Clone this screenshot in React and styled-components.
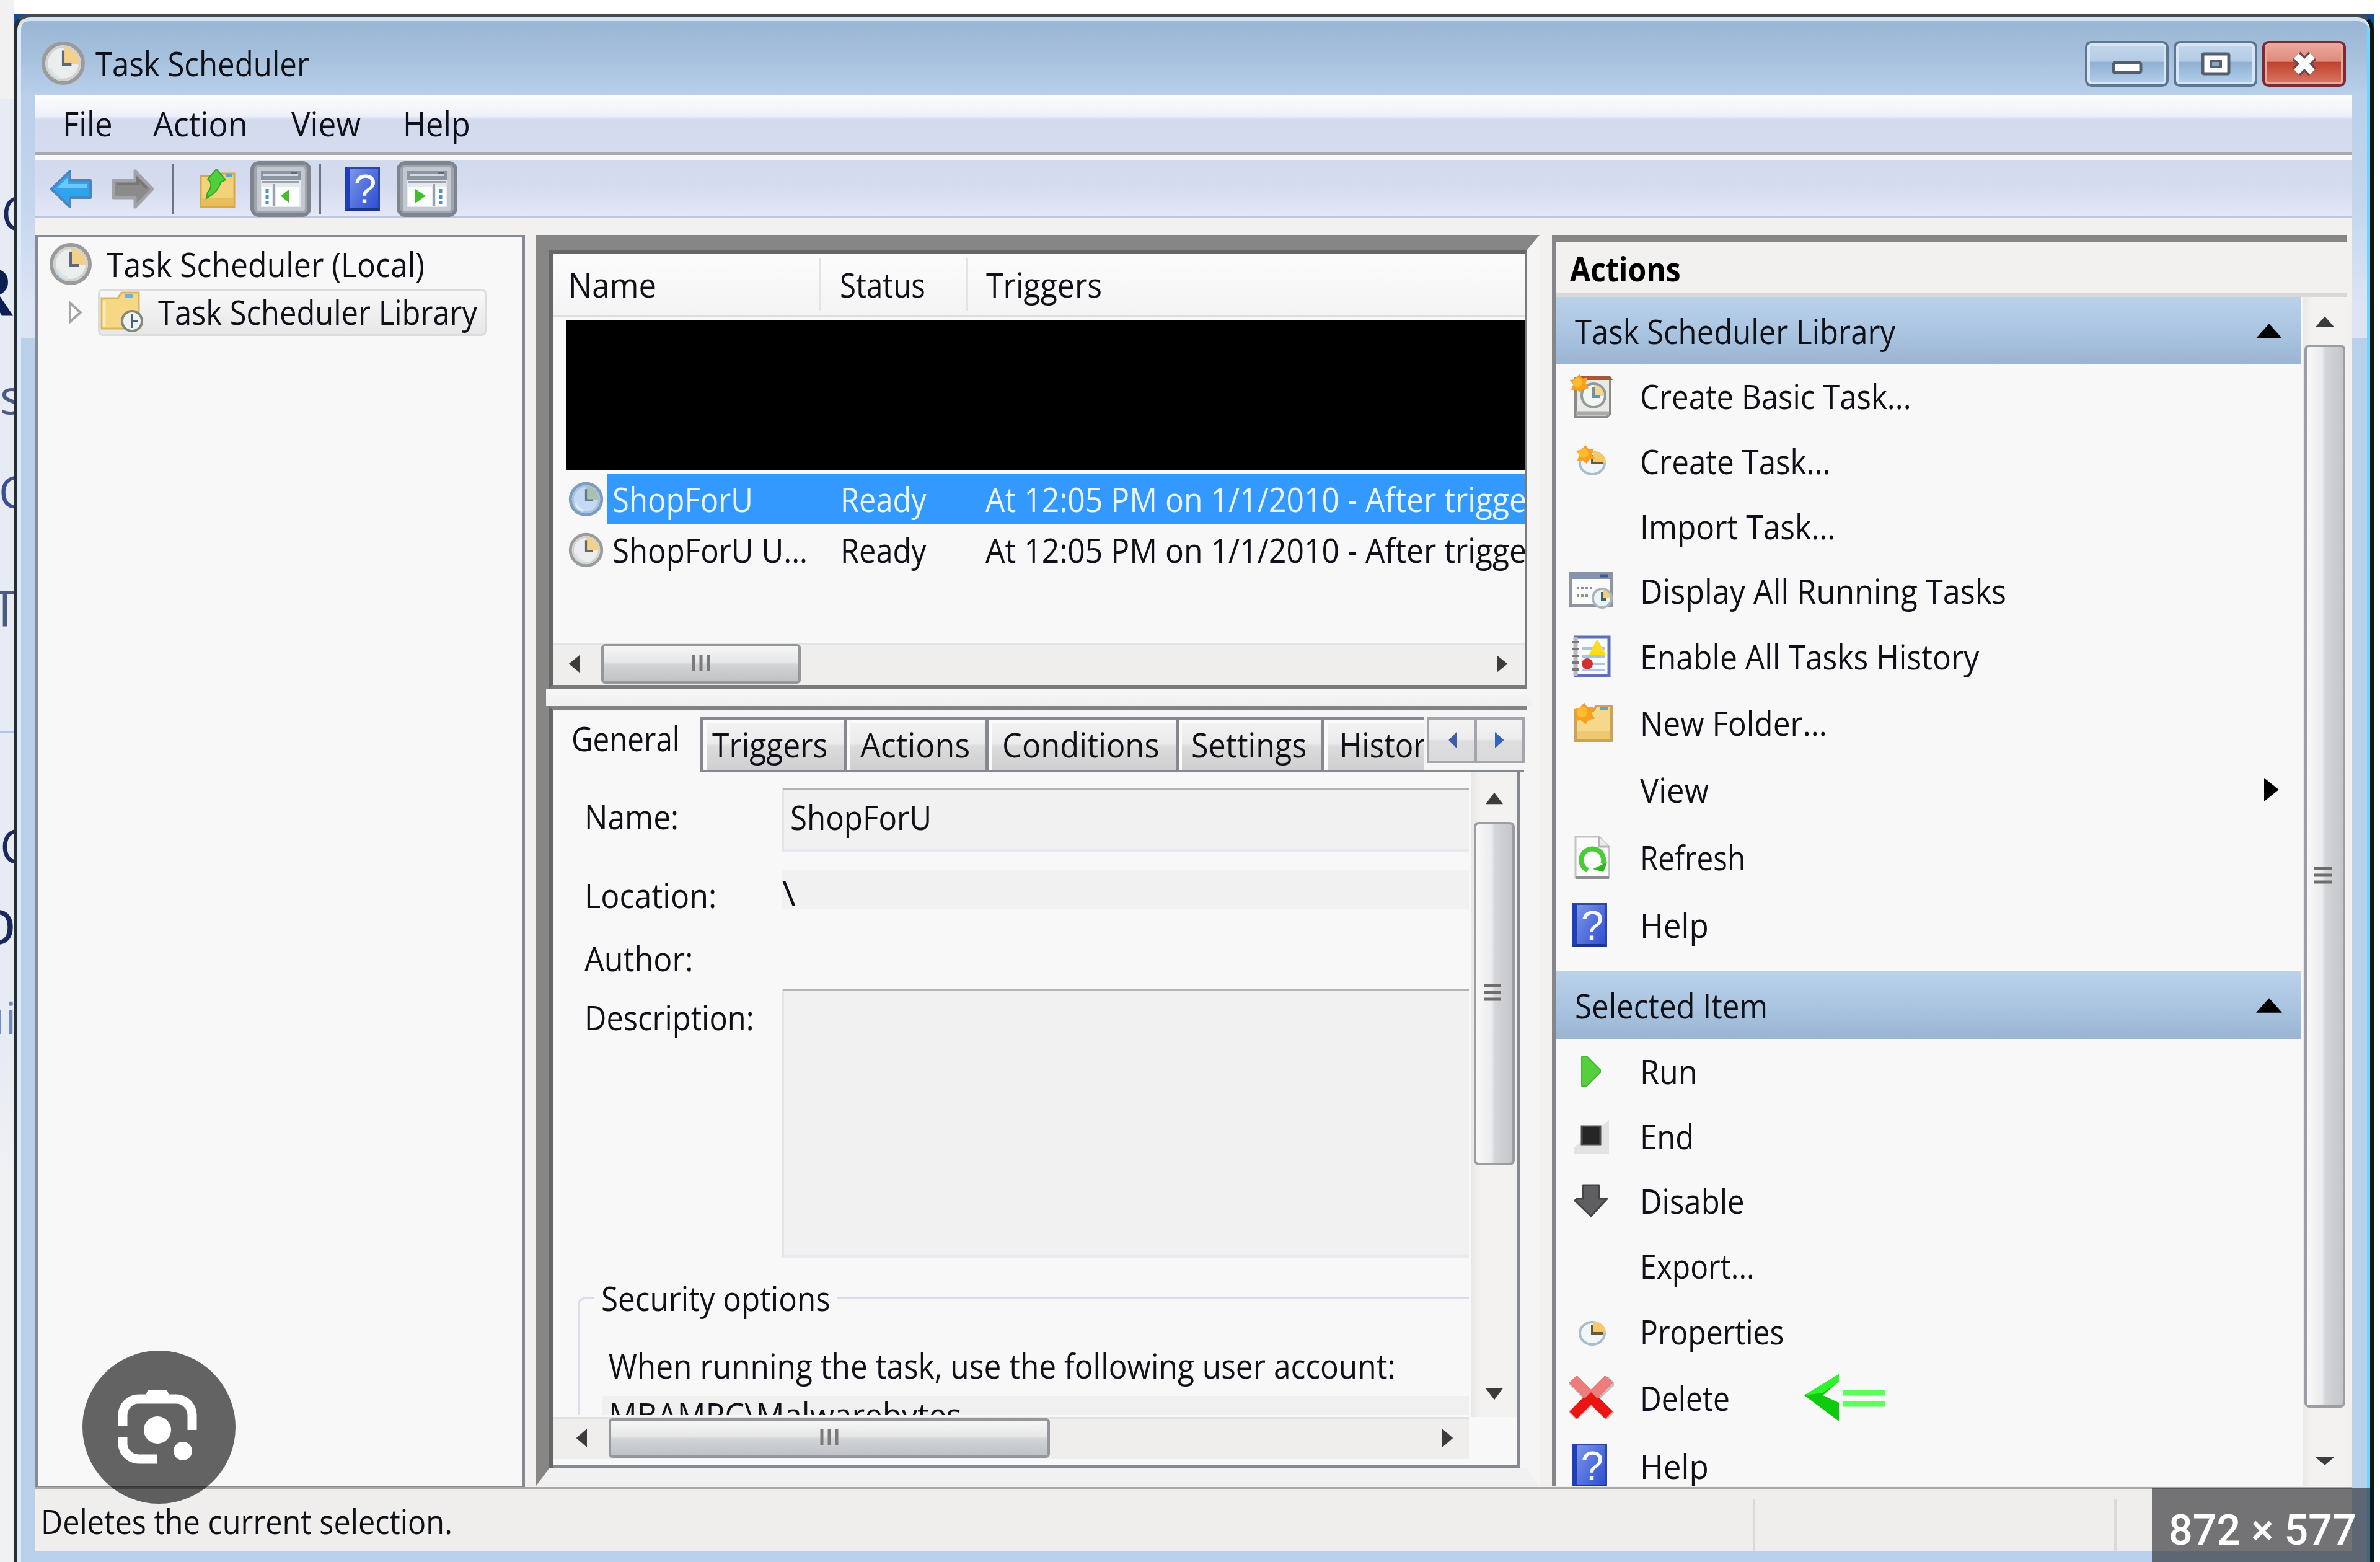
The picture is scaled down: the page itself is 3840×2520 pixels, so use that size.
import React, { useLayoutEffect, useRef, useState } from 'react'
import styled, { createGlobalStyle, css } from 'styled-components'

const GlobalStyle = createGlobalStyle`
  *{
    box-sizing: border-box;
  }

  body{
    margin: 0;
    background-color: #ffffff;
    font-family: "Open Sans", "Noto Sans", sans-serif;
    font-size: 54px;
    line-height: 72px;
    color: #101018;
  }

  svg{
    display: block;
    flex: none;
  }
`

const Screen = styled.div`
  position: relative;
  display: grid;
  grid-template-columns: 22px 3808px 10px;
  width: 3840px;
  height: 2520px;
  overflow: hidden;
  background-color: #ffffff;
`

/* page that is still visible behind the window */
const PageStrip = styled.div`
  display: flex;
  flex-direction: column;
  overflow: hidden;
  background: linear-gradient(#f1f1f1 0 160px, #e7ebf4 160px 1180px, #a9c6f0 1180px 1183px, #e7ebf4 1183px 1700px, #f0f1f3 1900px);
`

const PageLetter = styled.span`
  height: ${props => props.$h}px;
  margin-top: ${props => props.$gap || 0}px;
  margin-left: ${props => props.$x}px;
  line-height: ${props => props.$h}px;
  font-size: ${props => props.$size}px;
  font-weight: ${props => props.$bold ? 700 : 400};
  color: ${props => props.$color || '#1b2a5c'};
  white-space: nowrap;
`

const Desktop = styled.div`
  height: 2498px;
  margin-top: 22px;
  background-color: #0b4c9c;
`

const Window = styled.div`
  display: flex;
  flex-direction: column;
  height: 2498px;
  padding: 0 29px;
  border-top: 6px solid #434a50;
  border-left: 6px solid #2a2c2e;
  border-right: 6px solid #0c1518;
  border-radius: 26px 26px 0 0;
  box-shadow: inset 0 6px 0 #d5e4f2, inset 6px 0 0 #dcebf9, inset -5px 0 0 #6fd6fb;
  background: linear-gradient(#9ab4d3 0, #a5c0dc 60px, #b9cfea 125px, #c3d6ed 300px, #dde5f5 470px, #dde5f5 517px, #b9d0ea 518px);
`

const TitleBar = styled.div`
  display: flex;
  flex: none;
  align-items: center;
  height: 125px;
  padding: 0 10px 0 9px;
`

const TitleText = styled.div`
  flex: 1;
  padding: 22px 0 0 16px;
`

const TitleIcon = styled.div`
  padding-top: 22px;
`

const WindowButton = styled.div`
  display: flex;
  align-items: center;
  justify-content: center;
  width: 135px;
  height: 74px;
  margin: 25px 0 0 8px;
  padding-top: ${props => props.$low ? 12 : 0}px;
  border: 4px solid #5f7690;
  border-radius: 10px;
  box-shadow: inset 0 0 0 4px #d6e6f5;
  background: linear-gradient(#c2d7ec 0, #b3cce6 44%, #8fb0d3 46%, #b4d0eb 100%);
  ${props => props.$close && css`
    border-color: #7b2c33;
    box-shadow: inset 0 0 0 4px #eba89e;
    background: linear-gradient(#eba99d 0, #dd8a7c 44%, #c0412b 46%, #d97868 100%);
  `}
`

const Client = styled.div`
  display: flex;
  flex-direction: column;
  height: 2350px;
  background-color: #f2f1f0;
`

const MenuBar = styled.div`
  display: flex;
  align-items: center;
  height: 98px;
  padding: 0 0 2px 44px;
  border-bottom: 4px solid #a6a8ac;
  background: linear-gradient(#fdfdfd 0, #eef1fa 34px, #d4daed 40px, #d6dcef 100%);
`

const MenuItem = styled.div`
  margin-right: ${props => props.$gap}px;
`

const ToolBar = styled.div`
  display: flex;
  align-items: center;
  height: 102px;
  padding: 3px 0 0 24px;
  border-top: 8px solid #f9f9fb;
  border-bottom: 4px solid #bcc6dc;
  background: linear-gradient(#d2daed 0, #d6dcf0 50%, #e3e7f6 100%);
`

const ToolSlot = styled.div`
  width: ${props => props.$w}px;
`

const ToolDivider = styled.div`
  width: 4px;
  height: 80px;
  margin-right: ${props => props.$gap}px;
  background-color: #6d7285;
`

const ToolToggle = styled.div`
  display: flex;
  align-items: center;
  justify-content: center;
  width: 98px;
  height: 90px;
  margin-right: ${props => props.$gap || 0}px;
  border: 6px solid #80848c;
  border-radius: 14px;
  box-shadow: inset 0 0 0 4px #9fa4ad;
  background-color: #c3c8d1;
`

const Body = styled.div`
  display: flex;
  height: 2047px;
  padding-top: 27px;
`

const Tree = styled.div`
  width: 790px;
  height: 2023px;
  padding: 7px 0 0 18px;
  border: 4px solid #868a94;
  background-color: #f8f8f8;
`

const TreeRow = styled.div`
  display: flex;
  align-items: center;
  gap: 23px;
  height: 76px;
  padding-bottom: 4px;
`

const TreeChild = styled.div`
  display: flex;
  align-items: center;
  padding-left: 30px;
`

const TreeSelected = styled.div`
  display: flex;
  align-items: center;
  gap: 22px;
  width: 627px;
  height: 76px;
  margin-left: 23px;
  padding: 0 0 2px 0;
  border: 3px solid #dcdcde;
  border-radius: 8px;
  background: linear-gradient(#f8f8f8, #e7e7e7);
`

const Center = styled.div`
  display: flex;
  flex-direction: column;
  width: 1619px;
  height: 2018px;
  margin-left: 18px;
  border-style: solid;
  border-width: 24px 20px 28px 21px;
  border-color: #868686 #f5f5f5 #f1f1f1 #868686;
`

const ListPane = styled.div`
  display: flex;
  flex-direction: column;
  flex: none;
  height: 708px;
  border-style: solid;
  border-width: 6px 4px 6px 6px;
  border-color: #666666 #7a7a7a #7a7a7a #666666;
  background-color: #f8f8f8;
  overflow: hidden;
`

const ListHeader = styled.div`
  display: flex;
  align-items: center;
  height: 103px;
  padding-left: 25px;
  border-bottom: 4px solid #dddddd;
  background: linear-gradient(#fcfcfc, #f4f4f6);
`

const HeaderCell = styled.div`
  display: flex;
  align-items: center;
  height: 84px;
  width: ${props => props.$w}px;
  padding-left: ${props => props.$pad || 0}px;
  border-right: ${props => props.$last ? 'none' : '3px solid #e4e4e8'};
`

const Redacted = styled.div`
  height: 242px;
  margin: 4px 0 6px 22px;
  background-color: #000000;
`

const TaskRow = styled.div`
  display: flex;
  align-items: center;
  height: 82px;
  padding-left: 25px;
  color: ${props => props.$selected ? '#eaf4ff' : '#101018'};
`

const TaskCells = styled.div`
  display: grid;
  grid-template-columns: 368px 234px 1fr;
  align-items: center;
  width: 1480px;
  height: 82px;
  margin-left: 6px;
  padding-left: 8px;
  overflow: hidden;
  background-color: ${props => props.$selected ? '#3399ff' : 'transparent'};
`

const Filler = styled.div`
  flex: 1;
`

const HScroll = styled.div`
  display: flex;
  align-items: center;
  width: ${props => props.$w ? props.$w + 'px' : '100%'};
  height: 68px;
  padding: 0 ${props => props.$end}px 4px ${props => props.$start}px;
  border-top: 3px solid #e2e2e2;
  background-color: #f0eeed;
`

const HThumb = styled.div`
  display: flex;
  align-items: center;
  justify-content: center;
  width: ${props => props.$w}px;
  height: 64px;
  margin-left: 35px;
  margin-right: auto;
  border: 4px solid #94979b;
  border-radius: 6px;
  background: linear-gradient(#f6f6f6 0, #e6e7e8 45%, #d2d4d6 52%, #bfc3c7 100%);
`

const VScroll = styled.div`
  display: flex;
  flex-direction: column;
  align-items: center;
  width: ${props => props.$w}px;
  padding: ${props => props.$start}px 0 ${props => props.$end}px;
  background: linear-gradient(90deg, #e9e8e8, #f3f2f1 20%, #f3f2f1);
`

const VThumb = styled.div`
  display: flex;
  align-items: center;
  justify-content: center;
  width: ${props => props.$w}px;
  height: ${props => props.$h}px;
  margin-top: ${props => props.$gap}px;
  margin-bottom: auto;
  padding: 0 6px 4px 0;
  border: 4px solid #9a9da1;
  border-radius: 8px;
  background: linear-gradient(90deg, #f8f8f8 0, #ececee 42%, #d4d5d8 52%, #c4c6c9 100%);
`

const Splitter = styled.div`
  flex: none;
  height: 28px;
  margin-left: -5px;
  margin-right: -8px;
  background: linear-gradient(#f7f7f7, #f0f0f0);
`

const DetailPane = styled.div`
  display: flex;
  flex-direction: column;
  flex: 1;
  min-height: 0;
  border-top: 7px solid #828282;
  border-left: 6px solid #666666;
  background-color: #f5f5f5;
`

const TabRow = styled.div`
  display: flex;
  flex: none;
  height: 100px;
`

const ActiveTab = styled.div`
  width: 238px;
  padding: 9px 0 0 30px;
  background-color: #f8f8f8;
`

const TabStrip = styled.div`
  display: flex;
  width: 1329px;
  padding-top: 11px;
  border-bottom: 4px solid #85888f;
`

const Tab = styled.div`
  flex: none;
  width: ${props => props.$w}px;
  height: 85px;
  padding: 4px 0 0 ${props => props.$pad}px;
  overflow: hidden;
  border-top: 4px solid #85888f;
  border-left: 5px solid #85888f;
  box-shadow: inset 5px 5px 0 #fbfbfb;
  background: linear-gradient(#f3f3f3 0, #ebebeb 48%, #dcdcdc 52%, #cfcfd1 100%);
`

const TabArrow = styled.div`
  display: flex;
  flex: none;
  align-items: center;
  justify-content: center;
  width: 81px;
  height: 74px;
  margin-left: ${props => props.$first ? 4 : -4}px;
  border: 4px solid #a3a6ad;
  background: linear-gradient(#f4f4f4 0, #ececec 48%, #dedede 52%, #dadadd 100%);
`

const TabPage = styled.div`
  display: flex;
  flex-direction: column;
  width: 1560px;
  height: 1123px;
  border-right: 4px solid #85888f;
  border-bottom: 6px solid #85888f;
  background-color: #f8f8f8;
`

const TabPageMain = styled.div`
  display: flex;
  justify-content: space-between;
  height: 1040px;
`

const Form = styled.div`
  width: 1478px;
  height: 1037px;
  overflow: hidden;
`

const FormRow = styled.div`
  display: flex;
  height: ${props => props.$h}px;
  margin-top: ${props => props.$gap}px;
  padding-left: 51px;
`

const FormLabel = styled.div`
  width: 319px;
  padding-top: ${props => props.$top}px;
`

const FormField = styled.div`
  flex: 1;
  padding: ${props => props.$top || 0}px 0 0 ${props => props.$pad || 0}px;
  background-color: #f1f1f1;
  ${props => props.$boxed && css`
    border-top: 4px solid #b0b3b9;
    border-left: 3px solid #e3e4ea;
    border-bottom: 4px solid #e9eaee;
  `}
`

const Group = styled.fieldset`
  min-width: 0;
  height: 300px;
  margin: 29px 0 0 40px;
  padding: 0;
  border: 3px solid #dadceb;
  border-right: none;
  border-top-left-radius: 12px;
`

const GroupLegend = styled.legend`
  margin-left: 24px;
  padding: 0 11px;
`

const AccountNote = styled.div`
  margin: 37px 0 13px 47px;
`

const AccountName = styled.div`
  height: 64px;
  margin-left: 36px;
  padding-left: 11px;
  line-height: 60px;
  background-color: #f1f0f0;
`

const Actions = styled.div`
  display: flex;
  flex-direction: column;
  width: 1283px;
  height: 2018px;
  margin-left: 20px;
  border-top: 11px solid #858587;
  border-left: 7px solid #85858a;
  overflow: hidden;
  background-color: #f8f8f8;
`

const ActionsTitle = styled.div`
  flex: none;
  height: 89px;
  padding: 7px 0 0 22px;
  border-bottom: 7px solid #d9d8d4;
  background-color: #f2f1f0;
  font-weight: 700;
  color: #000000;
`

const ActionsMain = styled.div`
  display: flex;
  justify-content: space-between;
  flex: 1;
  min-height: 0;
`

const ActionsList = styled.div`
  width: 1201px;
  overflow: hidden;
`

const ActionsHeading = styled.div`
  display: flex;
  align-items: center;
  justify-content: space-between;
  height: 109px;
  margin-top: ${props => props.$gap || 0}px;
  padding: 0 30px 0 30px;
  background: linear-gradient(#bad1ea 0, #a9c4e0 55%, #9ab4d3 100%);
`

const ActionItem = styled.div`
  display: flex;
  align-items: center;
  height: ${props => props.$h}px;
  padding: 0 0 4px 21px;
`

const ActionIcon = styled.div`
  width: 114px;
`

const SubmenuMark = styled.div`
  margin-left: auto;
  padding-right: 33px;
`

const DeleteHint = styled.div`
  margin-left: 120px;
`

const StatusBar = styled.div`
  display: flex;
  align-items: center;
  flex: none;
  height: 104px;
  padding: 14px 0 0 9px;
  border-top: 4px solid #a9a9a9;
  background-color: #f0eeed;
`

const StatusCell = styled.div`
  height: 84px;
  width: ${props => props.$w}px;
  border-right: 4px solid #dbdad9;
`

const LensButton = styled.div`
  position: absolute;
  left: 133px;
  top: 2179px;
  display: flex;
  align-items: center;
  justify-content: center;
  width: 247px;
  height: 247px;
  padding: 0 5px 8px 0;
  border-radius: 50%;
  background-color: rgba(0, 0, 0, 0.6);
`

const SizeBadge = styled.div`
  position: absolute;
  left: 3472px;
  top: 2400px;
  width: 352px;
  height: 120px;
  padding: 33px 0 0 27px;
  background-color: rgba(32, 33, 36, 0.6);
  font-family: Roboto, sans-serif;
  font-weight: 500;
  font-size: 68px;
  color: #ffffff;
`

const LabelSlot = styled.span`
  display: block;
  flex: none;
  width: ${props => props.$w}px;
`

const LabelText = styled.span`
  display: inline-block;
  white-space: pre;
  vertical-align: top;
  transform-origin: 0 50%;
`

// condenses the text so that it takes exactly w pixels
const Label = ({ w, children }) => {
  const ref = useRef(null)
  const [scale, setScale] = useState(1)

  useLayoutEffect(() => {
    setScale(w / ref.current.offsetWidth)
  }, [w, children])

  return (
    <LabelSlot $w={w}>
      <LabelText ref={ref} style={{ transform: `scaleX(${scale})` }}>{children}</LabelText>
    </LabelSlot>
  )
}

const ClockIcon = ({ size = 70, tint }) => (
  <svg width={size} height={size} viewBox="0 0 70 70">
    <circle cx="35" cy="35" r="31" fill={tint ? '#c3daf2' : '#eceeed'} stroke={tint ? '#7d9cc0' : '#9b9b9b'} strokeWidth="6" />
    <circle cx="35" cy="35" r="26" fill="none" stroke={tint ? '#a9c4e2' : '#d2d2d0'} strokeWidth="4" />
    <path d="M36 10a25 25 0 0 1 24 26H36z" fill={tint ? '#a9c2b0' : '#f3d18a'} />
    <path d="M35 15v22h13" fill="none" stroke={tint ? '#5a7798' : '#5c6a78'} strokeWidth="4" />
    <path d="M14 42a23 23 0 0 0 16 16" fill="none" stroke={tint ? '#dcebfa' : '#d4e6ec'} strokeWidth="5" />
  </svg>
)

const Arrow = ({ dir, color, w = 19, h = 28 }) => {
  const shapes = {
    left: '22,0 22,26 2,13',
    right: '0,0 0,26 20,13',
    up: '11,2 22,24 0,24',
    down: '0,2 22,2 11,24',
  }
  return (
    <svg width={w} height={h} viewBox="0 0 22 26" preserveAspectRatio="none">
      <polygon points={shapes[dir]} fill={color || '#3c3c3c'} />
    </svg>
  )
}

const Grip = ({ vertical }) => (
  <svg width="36" height="36" viewBox="0 0 36 36">
    {vertical
      ? <path d="M4 7h28M4 18h28M4 29h28" stroke="#6d6d6d" strokeWidth="5" />
      : <path d="M6 4v26M18 4v26M30 4v26" stroke="#7a7a7a" strokeWidth="5" />}
  </svg>
)

const BackIcon = () => (
  <svg width="68" height="64" viewBox="0 0 68 64">
    <path d="M2 32L32 3v15h33v28H32v15z" fill="#2fa3ee" stroke="#4c86bd" strokeWidth="4" strokeLinejoin="round" />
    <path d="M10 31L28 14v10h31v6z" fill="#6cc8fa" />
  </svg>
)

const ForwardIcon = () => (
  <svg width="70" height="64" viewBox="0 0 68 64">
    <path d="M66 32L38 3v15H3v28h35v15z" fill="#8b8b8b" stroke="#a2a2a8" strokeWidth="5" strokeLinejoin="round" />
    <path d="M8 24h34v-8l15 15" fill="none" stroke="#767676" strokeWidth="4" />
  </svg>
)

const FolderUpIcon = () => (
  <svg width="62" height="66" viewBox="0 0 62 66">
    <path d="M3 12h20l6-4h28v54H3z" fill="#f4d27a" stroke="#d3a94b" strokeWidth="3" />
    <path d="M5 48h50v12H5z" fill="#e8bd5c" />
    <rect x="44" y="9" width="10" height="5" fill="#58a5dc" />
    <path d="M28 1l15 17-8 4c-2 8-8 18-23 26l2-10c6-6 6-12 4-17l-4-4z" fill="#4fd03a" stroke="#36a52a" strokeWidth="2" />
  </svg>
)

const PaneIcon = ({ right }) => (
  <svg width="66" height="60" viewBox="0 0 66 60">
    <rect x="1" y="1" width="64" height="58" fill="#e6e9ee" />
    <rect x="1" y="1" width="64" height="14" fill="#8c94a0" />
    <path d="M5 7h56" stroke="#d5dae2" strokeWidth="4" />
    <path d="M50 4h10" stroke="#5f6875" strokeWidth="3" />
    <path d="M3 19h60" stroke="#9aa1ac" strokeWidth="4" />
    {right ? (
      <>
        <rect x="3" y="27" width="38" height="30" fill="#ffffff" />
        <rect x="47" y="27" width="16" height="30" fill="#ffffff" />
        <path d="M14 30v23l17-12z" fill="#44bd2c" />
        <path d="M55 30v24" stroke="#4f8fca" strokeWidth="5" strokeDasharray="6 4" />
        <path d="M44 22v36" stroke="#9aa1ac" strokeWidth="4" />
      </>
    ) : (
      <>
        <rect x="3" y="27" width="16" height="30" fill="#ffffff" />
        <rect x="25" y="27" width="38" height="30" fill="#ffffff" />
        <path d="M47 30v23L33 41z" fill="#44bd2c" />
        <path d="M11 30v24" stroke="#4f8fca" strokeWidth="5" strokeDasharray="6 4" />
        <path d="M22 22v36" stroke="#9aa1ac" strokeWidth="4" />
      </>
    )}
  </svg>
)

const HelpBook = styled.div`
  width: 57px;
  height: 71px;
  margin-left: ${props => props.$x || 0}px;
  border: 3px solid #2b46a8;
  border-left: 9px solid #1d3fb8;
  border-bottom: 5px solid #1e3488;
  background: linear-gradient(120deg, #7d95e8, #4c6adb 60%, #2f50cf);
  font-family: "Liberation Sans", sans-serif;
  font-weight: 400;
  font-size: 66px;
  line-height: 66px;
  text-align: center;
  text-indent: 3px;
  color: #f6f8ff;
`

const LibraryIcon = () => (
  <svg width="72" height="68" viewBox="0 0 72 68">
    <path d="M3 12h26l6-9h28v58H3z" fill="#f6d783" stroke="#dcb65e" strokeWidth="3" />
    <rect x="40" y="6" width="14" height="5" fill="#6db2e4" />
    <path d="M7 16v43" stroke="#fbe9b4" strokeWidth="5" />
    <circle cx="52" cy="49" r="16" fill="#eef3ee" stroke="#82887f" strokeWidth="4" />
    <path d="M52 38v22M52 49h9" fill="none" stroke="#4a6078" strokeWidth="4" />
  </svg>
)

const Spark = ({ x, y, r = 1 }) => (
  <g transform={`translate(${x} ${y}) scale(${r})`}>
    <path d="M0 -16L5 -9L14 -10L11 0L16 8L7 9L2 16L-5 10L-14 11L-10 1L-16 -6L-7 -8z" fill="#fba01c" />
    <circle cx="-3" cy="-2" r="8" fill="#ffbc30" />
  </g>
)

const BasicTaskIcon = () => (
  <svg width="72" height="72" viewBox="0 0 72 72">
    <path d="M10 8h56v56l-6 6H10z" fill="#e9e9e6" stroke="#8a8a88" strokeWidth="4" />
    <path d="M12 4h54l4 6H12z" fill="#a5573a" />
    <path d="M10 64h54" stroke="#a9a9a9" strokeWidth="7" />
    <circle cx="39" cy="35" r="19" fill="#f3f7f4" stroke="#8f9a9a" strokeWidth="4" />
    <path d="M40 18a17 17 0 0 1 16 18H40z" fill="#f2d58f" />
    <path d="M39 22v15h10" fill="none" stroke="#6b91a8" strokeWidth="4" />
    <Spark x={16} y={16} r={0.95} />
  </svg>
)

const TaskIcon = ({ spark }) => (
  <svg width="72" height="60" viewBox="0 0 72 60">
    <ellipse cx="37" cy="33" rx="20" ry="18" fill="#f1f6f8" stroke="#a9bec9" strokeWidth="4" />
    <path d="M38 14a20 18 0 0 1 21 19H38z" fill="#f3c96c" />
    <path d="M37 20v13h18" fill="none" stroke="#5e5a44" strokeWidth="4" />
    {spark && <Spark x={26} y={19} r={0.95} />}
  </svg>
)

const RunningIcon = () => (
  <svg width="72" height="64" viewBox="0 0 72 64">
    <rect x="2" y="4" width="66" height="52" fill="#fafafa" stroke="#8f959c" strokeWidth="4" />
    <path d="M2 8h66" stroke="#8394ae" strokeWidth="10" />
    <path d="M50 8h12" stroke="#3e5a8c" strokeWidth="5" />
    <path d="M12 28h24M12 40h20" stroke="#8b8f96" strokeWidth="4" strokeDasharray="4 3" />
    <circle cx="53" cy="44" r="15" fill="#eef5f8" stroke="#a9b6bd" strokeWidth="4" />
    <path d="M54 30a14 14 0 0 1 12 14H54z" fill="#f1cf7d" />
    <path d="M53 34v12h7" fill="none" stroke="#3e6076" strokeWidth="4" />
  </svg>
)

const HistoryIcon = () => (
  <svg width="72" height="70" viewBox="0 0 72 70">
    <rect x="10" y="4" width="54" height="62" fill="#fbfbfd" stroke="#5a72b4" strokeWidth="5" />
    <path d="M10 4v62" stroke="#b9b9bd" strokeWidth="7" />
    <path d="M4 12h12M4 23h12M4 34h12M4 45h12M4 56h12" stroke="#77777c" strokeWidth="4" />
    <path d="M20 22h38M20 35h38M20 47h38M20 57h38" stroke="#a9c4e4" strokeWidth="4" />
    <path d="M45 9l13 23H33z" fill="#fbdc22" stroke="#fbdc22" strokeWidth="2" strokeLinejoin="round" />
    <circle cx="29" cy="47" r="9" fill="#d2322d" />
  </svg>
)

const NewFolderIcon = () => (
  <svg width="72" height="66" viewBox="0 0 72 66">
    <path d="M10 14h28l6-8h24v56H10z" fill="#f5d88c" stroke="#c9a458" strokeWidth="4" />
    <path d="M12 46h54v14H12z" fill="#efc873" />
    <rect x="50" y="8" width="13" height="5" fill="#58a5dc" />
    <Spark x={24} y={18} r={1.1} />
  </svg>
)

const RefreshIcon = () => (
  <svg width="72" height="72" viewBox="0 0 72 72">
    <path d="M10 3h38l16 16v50H10z" fill="#fbfbfb" stroke="#c4c4c4" strokeWidth="3" />
    <path d="M48 3v16h16" fill="#ececec" stroke="#b5b5b5" strokeWidth="3" />
    <path d="M10 69h54" stroke="#8e8e8e" strokeWidth="4" />
    <path d="M30 57a18 18 0 1 1 24 -10" fill="none" stroke="#4ccb39" strokeWidth="8" />
    <path d="M61 44l-6 16-17-5z" fill="#2cb81c" />
  </svg>
)

const RunIcon = () => (
  <svg width="72" height="56" viewBox="0 0 72 56">
    <path d="M20 5l8-1 22 22v4L28 52h-8z" fill="#55cf3d" stroke="#47b535" strokeWidth="2" strokeLinejoin="round" />
  </svg>
)

const EndIcon = () => (
  <svg width="72" height="60" viewBox="0 0 72 60">
    <path d="M8 58V48L64 4v54z" fill="#e3e3e3" />
    <rect x="20" y="14" width="30" height="30" fill="#262626" stroke="#4d4d4d" strokeWidth="3" />
  </svg>
)

const DisableIcon = () => (
  <svg width="72" height="56" viewBox="0 0 72 56">
    <path d="M22 3h26v22h13L35 53L9 28l3-3h10z" fill="#5f5f61" stroke="#454547" strokeWidth="3" strokeLinejoin="round" />
  </svg>
)

const DeleteIcon = () => (
  <svg width="72" height="70" viewBox="0 0 72 70">
    <path d="M12 13L60 59M62 13L12 59" stroke="#8b6a6a" strokeWidth="18" strokeLinecap="square" opacity="0.4" />
    <path d="M12 11L58 57M58 11L12 57" stroke="#ea1513" strokeWidth="17" strokeLinecap="square" />
    <path d="M12 11L25 24M58 11L45 24" stroke="#ee7c7c" strokeWidth="17" strokeLinecap="square" />
  </svg>
)

const GreenArrow = () => (
  <svg width="132" height="76" viewBox="0 0 132 76">
    <path d="M0 34L56 0v12L30 34L56 46v30z" fill="#0ecb0e" />
    <path d="M0 34L56 0v12L30 30z" fill="#2cf52c" />
    <path d="M62 30h68M62 48h68" stroke="#5cff5c" strokeWidth="9" />
  </svg>
)

const LensIcon = () => (
  <svg width="128" height="128" viewBox="0 0 128 128">
    <path d="M8 65V48a26 26 0 0 1 26-26h60a26 26 0 0 1 26 26v24" fill="none" stroke="#ffffff" strokeWidth="15" />
    <path d="M42 22l7-15h30l7 15z" fill="#ffffff" />
    <path d="M8 84v12a26 26 0 0 0 26 23h30" fill="none" stroke="#ffffff" strokeWidth="15" />
    <circle cx="64" cy="72" r="22" fill="#ffffff" />
    <circle cx="105" cy="106" r="15" fill="#ffffff" />
  </svg>
)

const menus = [
  { name: 'File', w: 80, gap: 66 },
  { name: 'Action', w: 153, gap: 70 },
  { name: 'View', w: 112, gap: 68 },
  { name: 'Help', w: 109, gap: 0 },
]

const tabs = [
  { name: 'Triggers', text: 186, w: 231, pad: 14 },
  { name: 'Actions', text: 177, w: 229, pad: 22 },
  { name: 'Conditions', text: 254, w: 307, pad: 22 },
  { name: 'Settings', text: 186, w: 235, pad: 20 },
  { name: 'History', text: 164, w: 166, pad: 24 },
]

const tasks = [
  { name: 'ShopForU', w: 227, selected: true },
  { name: 'ShopForU U...', w: 315, selected: false },
]

const libraryActions = [
  { name: 'Create Basic Task...', w: 438, h: 106, icon: <BasicTaskIcon /> },
  { name: 'Create Task...', w: 307, h: 104, icon: <TaskIcon spark /> },
  { name: 'Import Task...', w: 315, h: 105 },
  { name: 'Display All Running Tasks', w: 591, h: 104, icon: <RunningIcon /> },
  { name: 'Enable All Tasks History', w: 547, h: 107, icon: <HistoryIcon /> },
  { name: 'New Folder...', w: 302, h: 108, icon: <NewFolderIcon /> },
  { name: 'View', w: 111, h: 108, submenu: true },
  { name: 'Refresh', w: 170, h: 109, icon: <RefreshIcon /> },
  { name: 'Help', w: 111, h: 110, icon: <HelpBook $x={4}>?</HelpBook> },
]

const itemActions = [
  { name: 'Run', w: 93, h: 108, icon: <RunIcon /> },
  { name: 'End', w: 87, h: 102, icon: <EndIcon /> },
  { name: 'Disable', w: 169, h: 105, icon: <DisableIcon /> },
  { name: 'Export...', w: 185, h: 106 },
  { name: 'Properties', w: 232, h: 106, icon: <TaskIcon /> },
  { name: 'Delete', w: 145, h: 107, icon: <DeleteIcon />, hint: true },
  { name: 'Help', w: 111, h: 113, icon: <HelpBook $x={4}>?</HelpBook> },
]

const ActionRows = ({ items }) => items.map((v, i) => (
  <ActionItem $h={v.h} key={i}>
    <ActionIcon>{v.icon}</ActionIcon>
    <Label w={v.w}>{v.name}</Label>
    {v.submenu && <SubmenuMark><Arrow dir="right" color="#000000" w={26} h={38} /></SubmenuMark>}
    {v.hint && <DeleteHint><GreenArrow /></DeleteHint>}
  </ActionItem>
))

const App = () => {
  return (
    <>
      <GlobalStyle />
      <Screen>
        <PageStrip>
          <PageLetter $h={80} $gap={303} $x={2} $size={76}>C</PageLetter>
          <PageLetter $h={100} $gap={36} $x={-50} $size={108} $bold $color="#0a1f52">R</PageLetter>
          <PageLetter $h={80} $gap={80} $x={0} $size={76} $color="#4a5a86">s</PageLetter>
          <PageLetter $h={80} $gap={73} $x={-2} $size={72} $color="#3d4f8c">C</PageLetter>
          <PageLetter $h={80} $gap={108} $x={-14} $size={80} $color="#4b5a80">T</PageLetter>
          <PageLetter $h={80} $gap={304} $x={0} $size={76}>C</PageLetter>
          <PageLetter $h={80} $gap={40} $x={-34} $size={100}>o</PageLetter>
          <PageLetter $h={80} $gap={76} $x={-36} $size={72} $color="#6f8cbc">ui</PageLetter>
        </PageStrip>
        <Desktop>
          <Window>
            <TitleBar>
              <TitleIcon><ClockIcon size={72} /></TitleIcon>
              <TitleText><Label w={345}>Task Scheduler</Label></TitleText>
              <WindowButton $low>
                <svg width="50" height="22" viewBox="0 0 50 22">
                  <rect x="3" y="3" width="44" height="16" rx="3" fill="#ffffff" stroke="#55606e" strokeWidth="5" />
                </svg>
              </WindowButton>
              <WindowButton>
                <svg width="48" height="38" viewBox="0 0 48 38">
                  <rect x="3" y="3" width="42" height="32" rx="2" fill="#ffffff" stroke="#55606e" strokeWidth="5" />
                  <rect x="16" y="14" width="16" height="10" fill="#8aa4c4" stroke="#55606e" strokeWidth="4" />
                </svg>
              </WindowButton>
              <WindowButton $close>
                <svg width="52" height="40" viewBox="0 0 52 40">
                  <path d="M13 7L39 33M39 7L13 33" stroke="#6a4a50" strokeWidth="18" />
                  <path d="M13 7L39 33M39 7L13 33" stroke="#ffffff" strokeWidth="11" />
                </svg>
              </WindowButton>
            </TitleBar>
            <Client>
              <MenuBar>
                {menus.map((v, i) => (
                  <MenuItem $gap={v.gap} key={i}><Label w={v.w}>{v.name}</Label></MenuItem>
                ))}
              </MenuBar>
              <ToolBar>
                <ToolSlot $w={98}><BackIcon /></ToolSlot>
                <ToolSlot $w={98}><ForwardIcon /></ToolSlot>
                <ToolDivider $gap={40} />
                <ToolSlot $w={83}><FolderUpIcon /></ToolSlot>
                <ToolToggle $gap={12}><PaneIcon /></ToolToggle>
                <ToolDivider $gap={38} />
                <ToolSlot $w={84}><HelpBook>?</HelpBook></ToolSlot>
                <ToolToggle><PaneIcon right /></ToolToggle>
              </ToolBar>
              <Body>
                <Tree>
                  <TreeRow>
                    <ClockIcon size={70} />
                    <Label w={513}>Task Scheduler (Local)</Label>
                  </TreeRow>
                  <TreeChild>
                    <svg width="26" height="38" viewBox="0 0 26 38">
                      <path d="M4 4v30L21 19z" fill="#ffffff" stroke="#a5a5a5" strokeWidth="4" />
                    </svg>
                    <TreeSelected>
                      <LibraryIcon />
                      <Label w={515}>Task Scheduler Library</Label>
                    </TreeSelected>
                  </TreeChild>
                </Tree>
                <Center>
                  <ListPane>
                    <ListHeader>
                      <HeaderCell $w={408}><Label w={142}>Name</Label></HeaderCell>
                      <HeaderCell $w={237} $pad={30}><Label w={138}>Status</Label></HeaderCell>
                      <HeaderCell $w={500} $pad={29} $last><Label w={187}>Triggers</Label></HeaderCell>
                    </ListHeader>
                    <Redacted />
                    {tasks.map((v, i) => (
                      <TaskRow $selected={v.selected} key={i}>
                        <ClockIcon size={57} tint={v.selected} />
                        <TaskCells $selected={v.selected}>
                          <Label w={v.w}>{v.name}</Label>
                          <Label w={139}>Ready</Label>
                          <Label w={873}>At 12:05 PM on 1/1/2010 - After trigge</Label>
                        </TaskCells>
                      </TaskRow>
                    ))}
                    <Filler />
                    <HScroll $start={24} $end={26}>
                      <Arrow dir="left" />
                      <HThumb $w={322}><Grip /></HThumb>
                      <Arrow dir="right" />
                    </HScroll>
                  </ListPane>
                  <Splitter />
                  <DetailPane>
                    <TabRow>
                      <ActiveTab><Label w={175}>General</Label></ActiveTab>
                      <TabStrip>
                        {tabs.map((v, i) => (
                          <Tab $w={v.w} $pad={v.pad} key={i}><Label w={v.text}>{v.name}</Label></Tab>
                        ))}
                        <TabArrow $first><Arrow dir="left" color="#3f5da8" w={14} h={26} /></TabArrow>
                        <TabArrow><Arrow dir="right" color="#3562bd" w={16} h={26} /></TabArrow>
                      </TabStrip>
                    </TabRow>
                    <TabPage>
                      <TabPageMain>
                        <Form>
                          <FormRow $h={103} $gap={25}>
                            <FormLabel $top={10}><Label w={152}>Name:</Label></FormLabel>
                            <FormField $boxed $top={7} $pad={10}><Label w={228}>ShopForU</Label></FormField>
                          </FormRow>
                          <FormRow $h={62} $gap={30}>
                            <FormLabel $top={4}><Label w={213}>Location:</Label></FormLabel>
                            <FormField><Label w={22}>\</Label></FormField>
                          </FormRow>
                          <FormRow $h={62} $gap={44}>
                            <FormLabel $top={-5}><Label w={175}>Author:</Label></FormLabel>
                          </FormRow>
                          <FormRow $h={434} $gap={23}>
                            <FormLabel $top={10}><Label w={274}>Description:</Label></FormLabel>
                            <FormField $boxed />
                          </FormRow>
                          <Group>
                            <GroupLegend><Label w={370}>Security options</Label></GroupLegend>
                            <AccountNote><Label w={1269}>When running the task, use the following user account:</Label></AccountNote>
                            <AccountName><Label w={569}>MBAMPC\Malwarebytes</Label></AccountName>
                          </Group>
                        </Form>
                        <VScroll $w={74} $start={31} $end={26}>
                          <Arrow dir="up" w={28} h={22} />
                          <VThumb $w={66} $h={554} $gap={27}><Grip vertical /></VThumb>
                          <Arrow dir="down" w={28} h={22} />
                        </VScroll>
                      </TabPageMain>
                      <HScroll $w={1478} $start={36} $end={24}>
                        <Arrow dir="left" h={30} />
                        <HThumb $w={712}><Grip /></HThumb>
                        <Arrow dir="right" h={30} />
                      </HScroll>
                    </TabPage>
                  </DetailPane>
                </Center>
                <Actions>
                  <ActionsTitle><Label w={179}>Actions</Label></ActionsTitle>
                  <ActionsMain>
                    <ActionsList>
                      <ActionsHeading>
                        <Label w={517}>Task Scheduler Library</Label>
                        <Arrow dir="up" color="#000000" w={42} h={28} />
                      </ActionsHeading>
                      <ActionRows items={libraryActions} />
                      <ActionsHeading $gap={18}>
                        <Label w={311}>Selected Item</Label>
                        <Arrow dir="up" color="#000000" w={42} h={28} />
                      </ActionsHeading>
                      <ActionRows items={itemActions} />
                    </ActionsList>
                    <VScroll $w={72} $start={30} $end={32}>
                      <Arrow dir="up" w={30} h={20} />
                      <VThumb $w={66} $h={1715} $gap={27}><Grip vertical /></VThumb>
                      <Arrow dir="down" w={32} h={16} />
                    </VScroll>
                  </ActionsMain>
                </Actions>
              </Body>
              <StatusBar>
                <StatusCell $w={2766}><Label w={664}>Deletes the current selection.</Label></StatusCell>
                <StatusCell $w={583} />
              </StatusBar>
            </Client>
          </Window>
        </Desktop>
        <LensButton><LensIcon /></LensButton>
        <SizeBadge><Label w={303}>872 × 577</Label></SizeBadge>
      </Screen>
    </>
  )
}

export default App
